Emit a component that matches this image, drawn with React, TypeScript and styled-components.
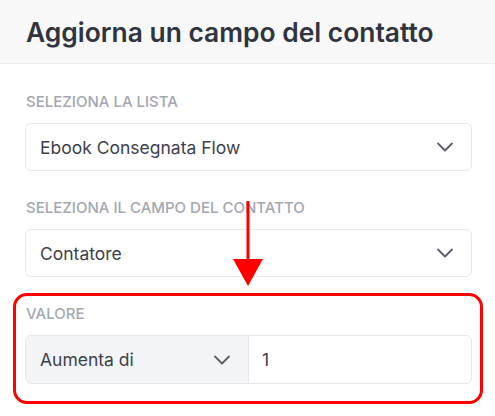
import React, { FC } from 'react'
import styled, { createGlobalStyle } from 'styled-components'

const GlobalStyle = createGlobalStyle`
  html, body {
    margin: 0;
    padding: 0;
    background: #ffffff;
  }
  body {
    font-family: Inter, "Noto Sans", "Liberation Sans", sans-serif;
    -webkit-font-smoothing: antialiased;
  }
`

const Chevron: FC = () => (
  <svg width="18" height="18" viewBox="0 0 18 18" fill="none" stroke="#585d68" strokeWidth="1.8" strokeLinecap="round" strokeLinejoin="round">
    <path d="M2 5.5l7 7 7-7" />
  </svg>
)

interface FieldSelectProps {
  label: string
  value: string
}

const FieldSelect: FC<FieldSelectProps> = ({ label, value }) => (
  <FormGroup>
    <FormLabel>{label}</FormLabel>
    <SelectBox>
      <SelectText>{value}</SelectText>
      <Chevron />
    </SelectBox>
  </FormGroup>
)

const App: FC = () => {
  return (
    <>
      <GlobalStyle />
      <Panel>
        <Header>
          <Title>Aggiorna un campo del contatto</Title>
        </Header>
        <Body>
          <FieldSelect label="Seleziona la lista" value="Ebook Consegnata Flow" />
          <FieldSelect label="Seleziona il campo del contatto" value="Contatore" />
          <FormGroup>
            <FormLabel>Valore</FormLabel>
            <InputGroup>
              <Operator>
                <SelectText>Aumenta di</SelectText>
                <Chevron />
              </Operator>
              <Amount>1</Amount>
            </InputGroup>
            <Highlight />
          </FormGroup>
          <Arrow width="32" height="86" viewBox="0 0 32 86">
            <rect x="14.5" y="0" width="3" height="60" fill="#ff0000" />
            <polygon points="1,58 31,58 16,85" fill="#ff0000" />
          </Arrow>
        </Body>
      </Panel>
    </>
  )
}

const Panel = styled.div`
  width: 495px;
  height: 416px;
  overflow: hidden;
  background: #ffffff;
`
const Header = styled.div`
  height: 63px;
  display: flex;
  align-items: center;
  padding: 0 26px;
  background: #f8f8f8;
  border-bottom: 1px solid #ececec;
`
const Title = styled.h1`
  margin: 0;
  font-size: 26.4px;
  font-weight: 600;
  color: #30343f;
`
const Body = styled.div`
  position: relative;
  display: flex;
  flex-direction: column;
  gap: 29px;
  padding: 30px 23px 0 25px;
`
const FormGroup = styled.div`
  position: relative;
  display: flex;
  flex-direction: column;
  gap: 13px;
`
const FormLabel = styled.div`
  font-size: 15px;
  line-height: 16px;
  font-weight: 500;
  color: #a3a7b0;
  text-transform: uppercase;
  padding-left: 1px;
`
const SelectBox = styled.div`
  height: 46px;
  display: flex;
  align-items: center;
  justify-content: space-between;
  padding: 0 17px 0 14px;
  border: 1px solid #e6e7ea;
  border-radius: 6px;
  background: #ffffff;
`
const SelectText = styled.span`
  font-size: 17.5px;
  color: #3d414b;
`
const InputGroup = styled.div`
  height: 47px;
  display: flex;
  border: 1px solid #e6e7ea;
  border-radius: 6px;
  overflow: hidden;
`
const Operator = styled.div`
  width: 223px;
  display: flex;
  align-items: center;
  justify-content: space-between;
  padding: 0 17px 0 14px;
  background: #f3f4f6;
  border-right: 1px solid #e6e7ea;
  box-sizing: border-box;
`
const Amount = styled.div`
  flex: 1;
  display: flex;
  align-items: center;
  padding-left: 13px;
  font-size: 17.5px;
  color: #3d414b;
`
const Highlight = styled.div`
  position: absolute;
  top: -13px;
  left: -12px;
  right: -11px;
  bottom: -20px;
  border: 3px solid #ff0000;
  border-radius: 14px;
  pointer-events: none;
`
const Arrow = styled.svg`
  position: absolute;
  left: 232px;
  top: 137px;
`

export default App
